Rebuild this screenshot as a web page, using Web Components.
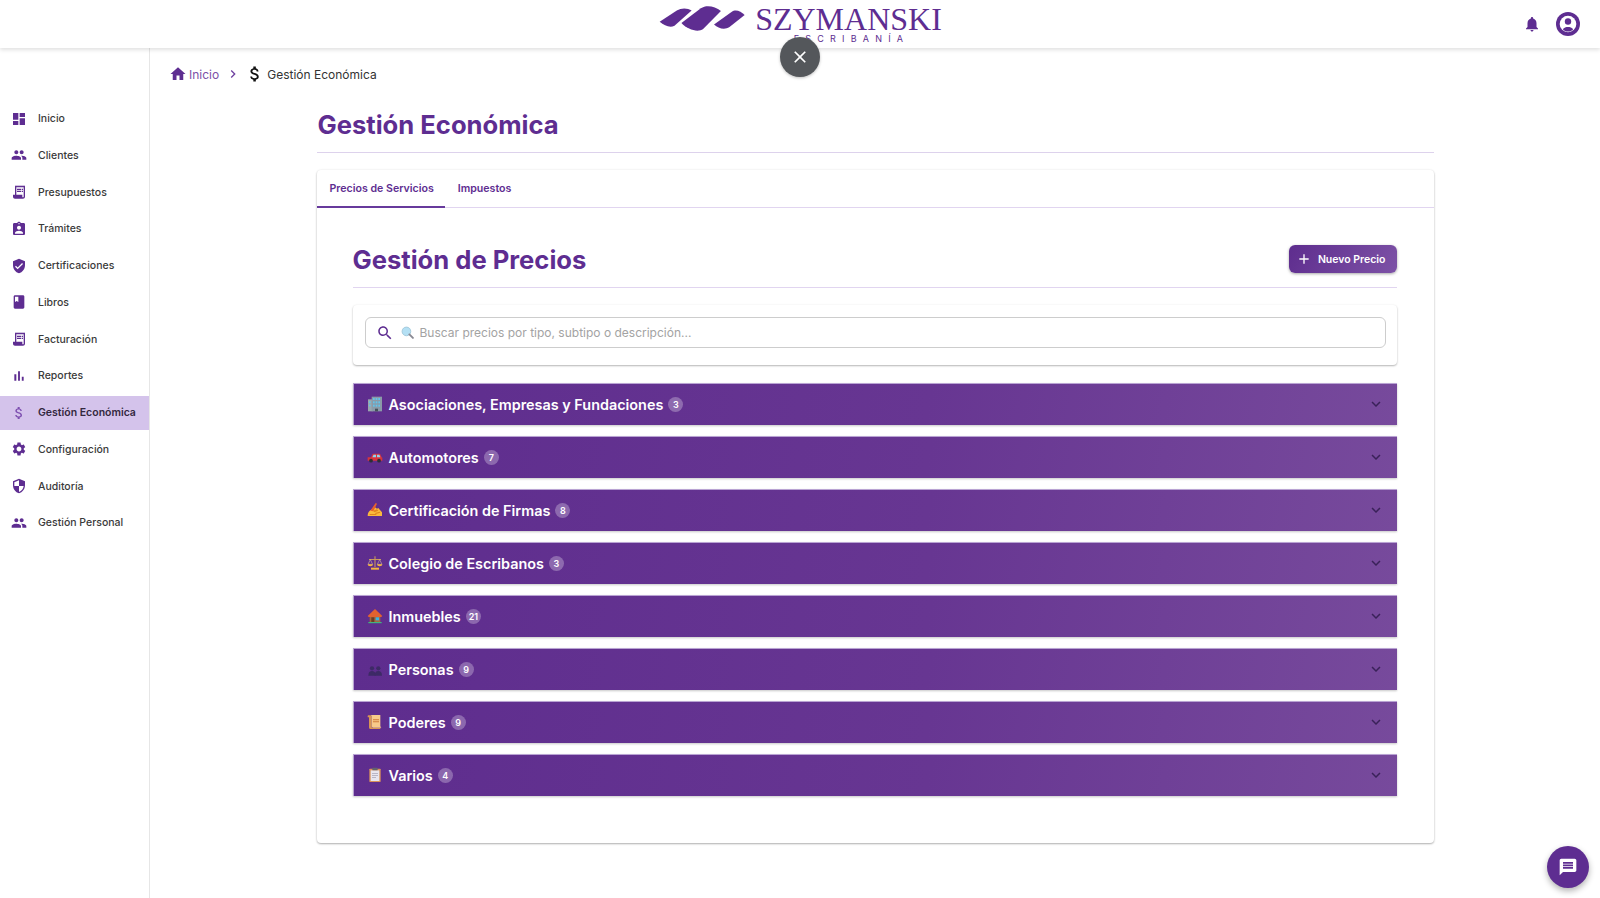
<!DOCTYPE html>
<html lang="es">
<head>
<meta charset="utf-8">
<title>Gestión Económica</title>
<style>
    html, body { margin: 0; height: 100%; background: #fff; }
    body { font-family: Inter, "Liberation Sans", sans-serif; color: #2b2b2b; overflow: hidden; }
</style>
</head>
<body>
<app-shell></app-shell>

<script>
const PATHS = {
    dashboard: 'M3 13h8V3H3v10zm0 8h8v-6H3v6zm10 0h8V11h-8v10zm0-18v6h8V3h-8z',
    people: 'M16 11c1.66 0 2.99-1.34 2.99-3S17.66 5 16 5c-1.66 0-3 1.34-3 3s1.34 3 3 3zm-8 0c1.66 0 2.99-1.34 2.99-3S9.66 5 8 5C6.34 5 5 6.34 5 8s1.34 3 3 3zm0 2c-2.33 0-7 1.17-7 3.5V19h14v-2.5c0-2.33-4.67-3.5-7-3.5zm8 0c-.29 0-.62.02-.97.05 1.16.84 1.97 1.97 1.97 3.45V19h6v-2.5c0-2.33-4.67-3.5-7-3.5z',
    receipt: 'M19.5 3.5 18 2l-1.5 1.5L15 2l-1.5 1.5L12 2l-1.5 1.5L9 2 7.5 3.5 6 2v14H3v3c0 1.66 1.34 3 3 3h12c1.66 0 3-1.34 3-3V2l-1.5 1.5zM19 19c0 .55-.45 1-1 1s-1-.45-1-1v-3H8V5h11v14zM9 7h6v2H9zm7 0h2v2h-2zm-7 3h6v2H9zm7 0h2v2h-2z',
    assignment: 'M19 3h-4.18C14.4 1.84 13.3 1 12 1c-1.3 0-2.4.84-2.82 2H5c-1.1 0-2 .9-2 2v14c0 1.1.9 2 2 2h14c1.1 0 2-.9 2-2V5c0-1.1-.9-2-2-2zm-7 0c.55 0 1 .45 1 1s-.45 1-1 1-1-.45-1-1 .45-1 1-1zm0 4c1.66 0 3 1.34 3 3s-1.34 3-3 3-3-1.34-3-3 1.34-3 3-3zm6 12H6v-1.4c0-2 4-3.1 6-3.1s6 1.1 6 3.1V19z',
    verified: 'M12 1 3 5v6c0 5.55 3.84 10.74 9 12 5.16-1.26 9-6.45 9-12V5l-9-4zm-2 16-4-4 1.41-1.41L10 14.17l6.59-6.59L18 9l-8 8z',
    book: 'M18 2H6c-1.1 0-2 .9-2 2v16c0 1.1.9 2 2 2h12c1.1 0 2-.9 2-2V4c0-1.1-.9-2-2-2zM6 4h5v8l-2.5-1.5L6 12V4z',
    chart: 'M5 9.2h3V19H5zM10.6 5h2.8v14h-2.8zm5.6 8H19v6h-2.8z',
    money: 'M11.8 10.9c-2.27-.59-3-1.2-3-2.15 0-1.09 1.01-1.85 2.7-1.85 1.78 0 2.44.85 2.5 2.1h2.21c-.07-1.72-1.12-3.3-3.21-3.81V3h-3v2.16c-1.94.42-3.5 1.68-3.5 3.61 0 2.31 1.91 3.46 4.7 4.13 2.5.6 3 1.48 3 2.41 0 .69-.49 1.79-2.7 1.79-2.06 0-2.87-.92-2.98-2.1h-2.2c.12 2.19 1.76 3.42 3.68 3.83V21h3v-2.15c1.95-.37 3.5-1.5 3.5-3.55 0-2.84-2.43-3.81-4.7-4.4z',
    settings: 'M19.14 12.94c.04-.3.06-.61.06-.94 0-.32-.02-.64-.07-.94l2.03-1.58c.18-.14.23-.41.12-.61l-1.92-3.32c-.12-.22-.37-.29-.59-.22l-2.39.96c-.5-.38-1.03-.7-1.62-.94l-.36-2.54c-.04-.24-.24-.41-.48-.41h-3.84c-.24 0-.43.17-.47.41l-.36 2.54c-.59.24-1.13.57-1.62.94l-2.39-.96c-.22-.08-.47 0-.59.22L2.74 8.87c-.12.21-.08.47.12.61l2.03 1.58c-.05.3-.09.63-.09.94s.02.64.07.94l-2.03 1.58c-.18.14-.23.41-.12.61l1.92 3.32c.12.22.37.29.59.22l2.39-.96c.5.38 1.03.7 1.62.94l.36 2.54c.05.24.24.41.48.41h3.84c.24 0 .44-.17.47-.41l.36-2.54c.59-.24 1.13-.56 1.62-.94l2.39.96c.22.08.47 0 .59-.22l1.92-3.32c.12-.22.07-.47-.12-.61l-2.01-1.58zM12 15.6c-1.98 0-3.6-1.62-3.6-3.6s1.62-3.6 3.6-3.6 3.6 1.62 3.6 3.6-1.62 3.6-3.6 3.6z',
    security: 'M12 1 3 5v6c0 5.55 3.84 10.74 9 12 5.16-1.26 9-6.45 9-12V5l-9-4zm0 10.99h7c-.53 4.12-3.28 7.79-7 8.94V12H5V6.3l7-3.11v8.8z',
    home: 'M10 20v-6h4v6h5v-8h3L12 3 2 12h3v8z',
    bell: 'M12 22c1.1 0 2-.9 2-2h-4c0 1.1.89 2 2 2zm6-6v-5c0-3.07-1.64-5.64-4.5-6.32V4c0-.83-.67-1.5-1.5-1.5s-1.5.67-1.5 1.5v.68C7.63 5.36 6 7.92 6 11v5l-2 2v1h16v-1l-2-2z',
    search: 'M15.5 14h-.79l-.28-.27C15.41 12.59 16 11.11 16 9.5 16 5.91 13.09 3 9.5 3S3 5.91 3 9.5 5.91 16 9.5 16c1.61 0 3.09-.59 4.23-1.57l.27.28v.79l5 4.99L20.49 19l-4.99-5zm-6 0C7.01 14 5 11.99 5 9.5S7.01 5 9.5 5 14 7.01 14 9.5 11.99 14 9.5 14z',
    expand: 'M16.59 8.59 12 13.17 7.41 8.59 6 10l6 6 6-6z',
    message: 'M20 2H4c-1.1 0-1.99.9-1.99 2L2 22l4-4h14c1.1 0 2-.9 2-2V4c0-1.1-.9-2-2-2zm-2 12H6v-2h12v2zm0-3H6V9h12v2zm0-3H6V6h12v2z',
    close: 'M19 6.41 17.59 5 12 10.59 6.41 5 5 6.41 10.59 12 5 17.59 6.41 19 12 13.41 17.59 19 19 17.59 13.41 12z',
    add: 'M19 13h-6v6h-2v-6H5v-2h6V5h2v6h6v2z',
    next: 'M10 6 8.59 7.41 13.17 12l-4.58 4.59L10 18l6-6z'
};

// the emoji are drawn by hand, the sandbox has no colour emoji font
const EMOJI = {
    building: '<rect x="1.500" y="5" width="7" height="18" fill="#9aa6ad"/><rect x="7" y="1" width="15.500" height="22" fill="#8a9aa8"/><g fill="#62c3ea"><rect x="9" y="3" width="2.500" height="3"/><rect x="13" y="3" width="2.500" height="3"/><rect x="17" y="3" width="2.500" height="3"/><rect x="9" y="8" width="2.500" height="3"/><rect x="13" y="8" width="2.500" height="3"/><rect x="17" y="8" width="2.500" height="3"/><rect x="9" y="13" width="2.500" height="3"/><rect x="13" y="13" width="2.500" height="3"/><rect x="17" y="13" width="2.500" height="3"/><rect x="3" y="8" width="2.500" height="2.500"/><rect x="3" y="13" width="2.500" height="2.500"/></g><rect x="12" y="19" width="4.500" height="4" fill="#46525a"/>',
    car: '<path d="M1 12.500h5L8.500 7h11l2.500 5.500 1 .5v4.500H1z" fill="#d8343c"/><path d="M9.800 8.500h3.700v4H8zm5.200 0h3.500l1.700 4H15z" fill="#8fd3ee"/><circle cx="6" cy="17.500" r="2.800" fill="#2d2f36"/><circle cx="18" cy="17.500" r="2.800" fill="#2d2f36"/>',
    hand: '<path d="M1 21c0-4 1.500-7 4-8.500l7-4.500 3 2 2-1 2.500 3 3 3.500V21z" fill="#f9b93c"/><path d="M5 13 13 1.500l2 1.300L9.500 14z" fill="#e8612c"/><path d="M9 13l6-2 2 2-6 2.500zm3 3.500 7-2 1 1.500-7 2zM4 18h10v1.500H4z" fill="#e0851c"/>',
    scale: '<path d="M11.200 2h1.600v16h-1.600z" fill="#c99a5a"/><path d="M3 6h18v1.500H3z" fill="#c99a5a"/><path d="M5 7 1.500 14h7zM19 7l-3.500 7h7z" fill="none" stroke="#d9c9a8" stroke-width=".8"/><path d="M1 14h8a4 3 0 0 1-8 0zm14 0h8a4 3 0 0 1-8 0z" fill="#f4b63f"/><path d="M6 19h12v3H6z" fill="#f4b63f"/>',
    house: '<path d="M4 11h16v10H4z" fill="#a5683e"/><path d="M12 1.500 1 12l1.500 1.500h19L23 12z" fill="#e2622f"/><rect x="6.500" y="14" width="4.500" height="7" fill="#6b3d26"/><rect x="13" y="14" width="5" height="4.500" fill="#37b3e6"/><rect x="2" y="21" width="20" height="1.800" fill="#3fb57f"/>',
    people: '<g fill="#3d2a66"><circle cx="7.500" cy="11" r="3.200"/><path d="M2 22c0-5 2.200-7 5.500-7s5.500 2 5.500 7z"/><circle cx="17" cy="11" r="3.200"/><path d="M11.500 22c0-5 2.200-7 5.500-7s5.500 2 5.500 7z"/></g>',
    scroll: '<path d="M2 2h3c2 0 2 2 2 3v14c0 1 1 2 2 2h11v1.500H5c-2 0-2-2-2-3V5H1c0-2 0-3 1-3z" fill="#d99553"/><path d="M5 1.500h15v16c0 1 .5 2 1.500 3H9c-1 0-2-1-2-2V4c0-1.500-1-2.500-2-2.500z" fill="#f7c98a"/><path d="M9 8h9v1.500H9zm0 3h9v1.500H9z" fill="#cf7a3a"/>',
    clipboard: '<rect x="3.500" y="2.500" width="17" height="20" rx="1" fill="#d9925a"/><rect x="5.500" y="5" width="13" height="16" fill="#e8e6ef"/><rect x="8" y="1" width="8" height="4" rx="1" fill="#62636e"/><path d="M7.500 9h9v1.200h-9zm0 3h9v1.200h-9zm0 3h6v1.200h-6z" fill="#a9a7b8"/>',
    lens: '<circle cx="10" cy="10" r="8" fill="#b4e0f4" stroke="#9cc3d6" stroke-width="1.500"/><path d="m15.500 15.500 6.500 6.500" stroke="#8a8a94" stroke-width="3.500" stroke-linecap="round"/>'
};

class MuiIcon extends HTMLElement {
    connectedCallback() {
        const size = this.getAttribute('size') || 24;
        this.attachShadow({ mode: 'open' });
        this.shadowRoot.innerHTML = `
            <style>
                :host { display: inline-flex; flex: none; width: ${size}px; height: ${size}px; }
                svg { display: block; width: 100%; height: 100%; fill: currentColor; }
            </style>
            <svg viewBox="0 0 24 24"><path d="${PATHS[this.getAttribute('name')]}"></path></svg>
        `;
    }
}

class EmojiMark extends HTMLElement {
    connectedCallback() {
        const size = this.getAttribute('size') || 16;
        this.attachShadow({ mode: 'open' });
        this.shadowRoot.innerHTML = `
            <style>
                :host { display: inline-flex; flex: none; width: ${size}px; height: ${size}px; }
                svg { display: block; width: 100%; height: 100%; }
            </style>
            <svg viewBox="0 0 24 24">${EMOJI[this.getAttribute('name')]}</svg>
        `;
    }
}

class BrandLogo extends HTMLElement {
    connectedCallback() {
        this.attachShadow({ mode: 'open' });
        this.shadowRoot.innerHTML = `
            <style>
                :host { display: flex; align-items: flex-start; gap: 9px; color: #5e2d91; height: 48px; }
                svg { width: 87px; height: 28px; margin: 5px 0 0 1px; fill: #5e2d91; }
                .words { display: flex; flex-direction: column; align-items: center; }
                .name { font: 32px/28px "Liberation Serif", serif; margin-top: 5px; }
                .sub { font: 9px/10px Inter, sans-serif; letter-spacing: 6.2px; margin: 1px -6px 0 0; }
            </style>
            <svg viewBox="120 15 260 85">
                <path d="M120 66L172 32C186 23 205 24 217 32L165 78C150 86 135 77 120 66Z"/>
                <path d="M186 70L245 25C262 13 288 19 306 33L252 88C236 100 205 90 186 70Z"/>
                <path d="M285 74L338 36C352 26 366 35 378 45L332 82C316 92 298 86 285 74Z"/>
            </svg>
            <div class="words">
                <span class="name">SZYMANSKI</span>
                <span class="sub">ESCRIBANÍA</span>
            </div>
        `;
    }
}

class AppHeader extends HTMLElement {
    connectedCallback() {
        this.attachShadow({ mode: 'open' });
        this.shadowRoot.innerHTML = `
            <style>
                :host {
                    display: flex; justify-content: center; position: relative; z-index: 2;
                    height: 48px; background: #fff; box-shadow: 0 2px 4px rgba(0, 0, 0, .12);
                }
                .actions {
                    position: absolute; right: 20px; top: 0; height: 48px;
                    display: flex; align-items: center; gap: 15px; color: #5e2d91;
                }
                .avatar { width: 24px; height: 24px; display: block; }
                .close {
                    position: absolute; left: 780px; top: 37px; width: 40px; height: 40px;
                    border-radius: 50%; background: #54575b; color: #fff;
                    display: flex; align-items: center; justify-content: center;
                    box-shadow: 0 1px 3px rgba(0, 0, 0, .25);
                }
            </style>
            <brand-logo></brand-logo>
            <div class="actions">
                <mui-icon name="bell" size="18"></mui-icon>
                <svg class="avatar" viewBox="0 0 24 24">
                    <circle cx="12" cy="12" r="12" fill="#5e2d91"/>
                    <circle cx="12" cy="12" r="8.300" fill="#fff"/>
                    <circle cx="12" cy="9.500" r="3.200" fill="#5e2d91"/>
                    <path d="M6.800 17.200C8 15.600 10 15 12 15s4 .6 5.200 2.200C16 18.800 14 19.500 12 19.500s-4-.7-5.200-2.300z" fill="#5e2d91"/>
                </svg>
            </div>
            <div class="close"><mui-icon name="close" size="20"></mui-icon></div>
        `;
    }
}

class NavItem extends HTMLElement {
    connectedCallback() {
        this.attachShadow({ mode: 'open' });
        this.shadowRoot.innerHTML = `
            <style>
                :host {
                    display: flex; align-items: center; height: 34px; margin-bottom: 2.75px;
                    padding-left: 11px; gap: 11px; color: #3a3a3a;
                    font-size: 10.500px; font-weight: 500; white-space: nowrap;
                }
                :host([active]) { background: #d4c3eb; font-weight: 600; color: #33283f; }
                mui-icon { color: #5e2d91; }
                :host([active]) mui-icon { color: #7d4fb0; }
            </style>
            <mui-icon name="${this.getAttribute('icon')}" size="16"></mui-icon>
            <slot></slot>
        `;
    }
}

class SideNav extends HTMLElement {
    connectedCallback() {
        this.attachShadow({ mode: 'open' });
        this.shadowRoot.innerHTML = `
            <style>
                :host {
                    display: block; flex: none; width: 149px; padding-top: 53.500px;
                    background: #fff; border-right: 1px solid #e6e6e6;
                }
            </style>
            <slot></slot>
        `;
    }
}

class BreadCrumbs extends HTMLElement {
    connectedCallback() {
        this.attachShadow({ mode: 'open' });
        this.shadowRoot.innerHTML = `
            <style>
                :host {
                    display: flex; align-items: center; height: 20px; margin: 16px 0 0 19px;
                    font-size: 12px; color: #333;
                }
                .link { display: flex; align-items: center; gap: 2px; color: #7b4fa8; }
                .link mui-icon { color: #5e2d91; }
                .sep { color: #6f42a0; margin: 0 4px 0 6px; }
                .now { display: flex; align-items: center; gap: 2px; }
                .now mui-icon { color: #111; }
            </style>
            <span class="link"><mui-icon name="home" size="18"></mui-icon>Inicio</span>
            <mui-icon class="sep" name="next" size="16"></mui-icon>
            <span class="now"><mui-icon name="money" size="20"></mui-icon>Gestión Económica</span>
        `;
    }
}

class TabBar extends HTMLElement {
    connectedCallback() {
        this.attachShadow({ mode: 'open' });
        this.shadowRoot.innerHTML = `
            <style>
                :host {
                    display: flex; height: 37px; border-bottom: 1px solid #e1d5f0;
                    font-size: 10.600px; font-weight: 600; color: #5e2d91;
                }
                .tab { display: flex; align-items: flex-start; padding: 12px 12px 0 13px; height: 38px; box-sizing: border-box; }
                .on { border-bottom: 2px solid #673a9c; padding-right: 11px; }
            </style>
            <div class="tab on">Precios de Servicios</div>
            <div class="tab">Impuestos</div>
        `;
    }
}

class SearchCard extends HTMLElement {
    connectedCallback() {
        this.attachShadow({ mode: 'open' });
        this.shadowRoot.innerHTML = `
            <style>
                :host {
                    display: block; padding: 12px 11px 17px 12px; margin-bottom: 18px; background: #fff; border-radius: 4px;
                    box-shadow: 0 1px 2px rgba(0, 0, 0, .28), 0 0 3px rgba(0, 0, 0, .04);
                }
                .field {
                    display: flex; align-items: center; height: 29px; padding-left: 10px;
                    border: 1px solid #cdcdcd; border-radius: 6px; color: #5e2d91;
                }
                .hint { margin-left: 7px; margin-right: 6px; display: flex; }
                .text { font-size: 12px; color: #a3a3a3; }
            </style>
            <div class="field">
                <mui-icon name="search" size="18"></mui-icon>
                <span class="hint"><emoji-mark name="lens" size="13"></emoji-mark></span>
                <span class="text">Buscar precios por tipo, subtipo o descripción...</span>
            </div>
        `;
    }
}

class PriceGroup extends HTMLElement {
    connectedCallback() {
        this.attachShadow({ mode: 'open' });
        this.shadowRoot.innerHTML = `
            <style>
                :host {
                    display: flex; align-items: center; height: 41.500px; margin-bottom: 11.500px;
                    padding: 0 12px 0 13px; box-sizing: border-box; color: #fff;
                    background: linear-gradient(100deg, #5e2d8e 0%, #673692 55%, #774a9c 100%);
                    border-top: 1px solid #b9a3d3; border-left: 1px solid #b9a3d3;
                    box-shadow: 0 1px 2px rgba(0, 0, 0, .22);
                }
                .title { margin-left: 6px; font-size: 14.400px; font-weight: 600; white-space: nowrap; }
                .count {
                    min-width: 15px; height: 15px; box-sizing: border-box; padding: 0 3px; margin-left: 5px; border-radius: 8px;
                    background: rgba(255, 255, 255, .28); font-size: 9px; font-weight: 600;
                    display: flex; align-items: center; justify-content: center;
                }
                .arrow { margin-left: auto; color: #3a2159; }
            </style>
            <emoji-mark name="${this.getAttribute('emoji')}" size="16"></emoji-mark>
            <span class="title"><slot></slot></span>
            <span class="count">${this.getAttribute('count')}</span>
            <mui-icon class="arrow" name="expand" size="18"></mui-icon>
        `;
    }
}

class PricePanel extends HTMLElement {
    connectedCallback() {
        this.attachShadow({ mode: 'open' });
        this.shadowRoot.innerHTML = `
            <style>
                :host {
                    display: block; height: 673px; background: #fff; border-radius: 4px;
                    box-shadow: 0 1px 2px rgba(0, 0, 0, .3), 0 0 3px rgba(0, 0, 0, .06);
                }
                .inner { padding: 35px 37px 0 36px; }
                .head {
                    display: flex; align-items: center; justify-content: space-between;
                    height: 44px; border-bottom: 1px solid #e1d5f0; margin-bottom: 17px;
                }
                h2 { margin: 0; font-size: 25.600px; font-weight: 700; color: #5e2d91; position: relative; top: -6px; }
                .add {
                    display: flex; align-items: center; gap: 6px; height: 28px; padding: 0 11px 0 7px;
                    border-radius: 6px; color: #fff; font-size: 10.500px; font-weight: 600; position: relative; top: -6px;
                    background: linear-gradient(120deg, #5e2d8e, #7d52a6);
                    box-shadow: 0 1px 3px rgba(0, 0, 0, .35);
                }
            </style>
            <tab-bar></tab-bar>
            <div class="inner">
                <div class="head">
                    <h2>Gestión de Precios</h2>
                    <div class="add"><mui-icon name="add" size="16"></mui-icon>Nuevo Precio</div>
                </div>
                <search-card></search-card>
                <slot></slot>
            </div>
        `;
    }
}

class PageBody extends HTMLElement {
    connectedCallback() {
        this.attachShadow({ mode: 'open' });
        this.shadowRoot.innerHTML = `
            <style>
                :host { display: block; flex: 1; min-width: 0; }
                .wrap { width: 1117px; margin: 24px auto 0; }
                h1 {
                    margin: 0 0 17px; padding: 0 0 11px 1px; border-bottom: 1px solid #ddd2ec;
                    font-size: 25.600px; line-height: 33px; font-weight: 700; color: #5e2d91;
                }
            </style>
            <bread-crumbs></bread-crumbs>
            <div class="wrap">
                <h1>Gestión Económica</h1>
                <slot></slot>
            </div>
        `;
    }
}

class ChatFab extends HTMLElement {
    connectedCallback() {
        this.attachShadow({ mode: 'open' });
        this.shadowRoot.innerHTML = `
            <style>
                :host {
                    position: fixed; left: 1547px; top: 846px; width: 42px; height: 42px; border-radius: 50%;
                    background: #5e2d91; color: #fff; display: flex; align-items: center; justify-content: center;
                    box-shadow: 0 3px 6px rgba(0, 0, 0, .3);
                }
            </style>
            <mui-icon name="message" size="20"></mui-icon>
        `;
    }
}

class AppShell extends HTMLElement {
    connectedCallback() {
        const nav = [
            ['dashboard', 'Inicio'], ['people', 'Clientes'], ['receipt', 'Presupuestos'], ['assignment', 'Trámites'],
            ['verified', 'Certificaciones'], ['book', 'Libros'], ['receipt', 'Facturación'], ['chart', 'Reportes'],
            ['money', 'Gestión Económica'], ['settings', 'Configuración'], ['security', 'Auditoría'], ['people', 'Gestión Personal']
        ];
        const groups = [
            ['building', 'Asociaciones, Empresas y Fundaciones', 3], ['car', 'Automotores', 7],
            ['hand', 'Certificación de Firmas', 8], ['scale', 'Colegio de Escribanos', 3],
            ['house', 'Inmuebles', 21], ['people', 'Personas', 9], ['scroll', 'Poderes', 9], ['clipboard', 'Varios', 4]
        ];
        this.attachShadow({ mode: 'open' });
        this.shadowRoot.innerHTML = `
            <style>
                :host { display: flex; flex-direction: column; height: 898px; }
                .row { display: flex; flex: 1; min-height: 0; }
            </style>
            <app-header></app-header>
            <div class="row">
                <side-nav>
                    ${nav.map(([icon, label]) => `<nav-item icon="${icon}" ${label === 'Gestión Económica' ? 'active' : ''}>${label}</nav-item>`).join('')}
                </side-nav>
                <page-body>
                    <price-panel>
                        ${groups.map(([emoji, label, count]) => `<price-group emoji="${emoji}" count="${count}">${label}</price-group>`).join('')}
                    </price-panel>
                </page-body>
            </div>
            <chat-fab></chat-fab>
        `;
    }
}

customElements.define('mui-icon', MuiIcon);
customElements.define('emoji-mark', EmojiMark);
customElements.define('brand-logo', BrandLogo);
customElements.define('app-header', AppHeader);
customElements.define('nav-item', NavItem);
customElements.define('side-nav', SideNav);
customElements.define('bread-crumbs', BreadCrumbs);
customElements.define('tab-bar', TabBar);
customElements.define('search-card', SearchCard);
customElements.define('price-group', PriceGroup);
customElements.define('price-panel', PricePanel);
customElements.define('page-body', PageBody);
customElements.define('chat-fab', ChatFab);
customElements.define('app-shell', AppShell);
</script>
</body>
</html>
